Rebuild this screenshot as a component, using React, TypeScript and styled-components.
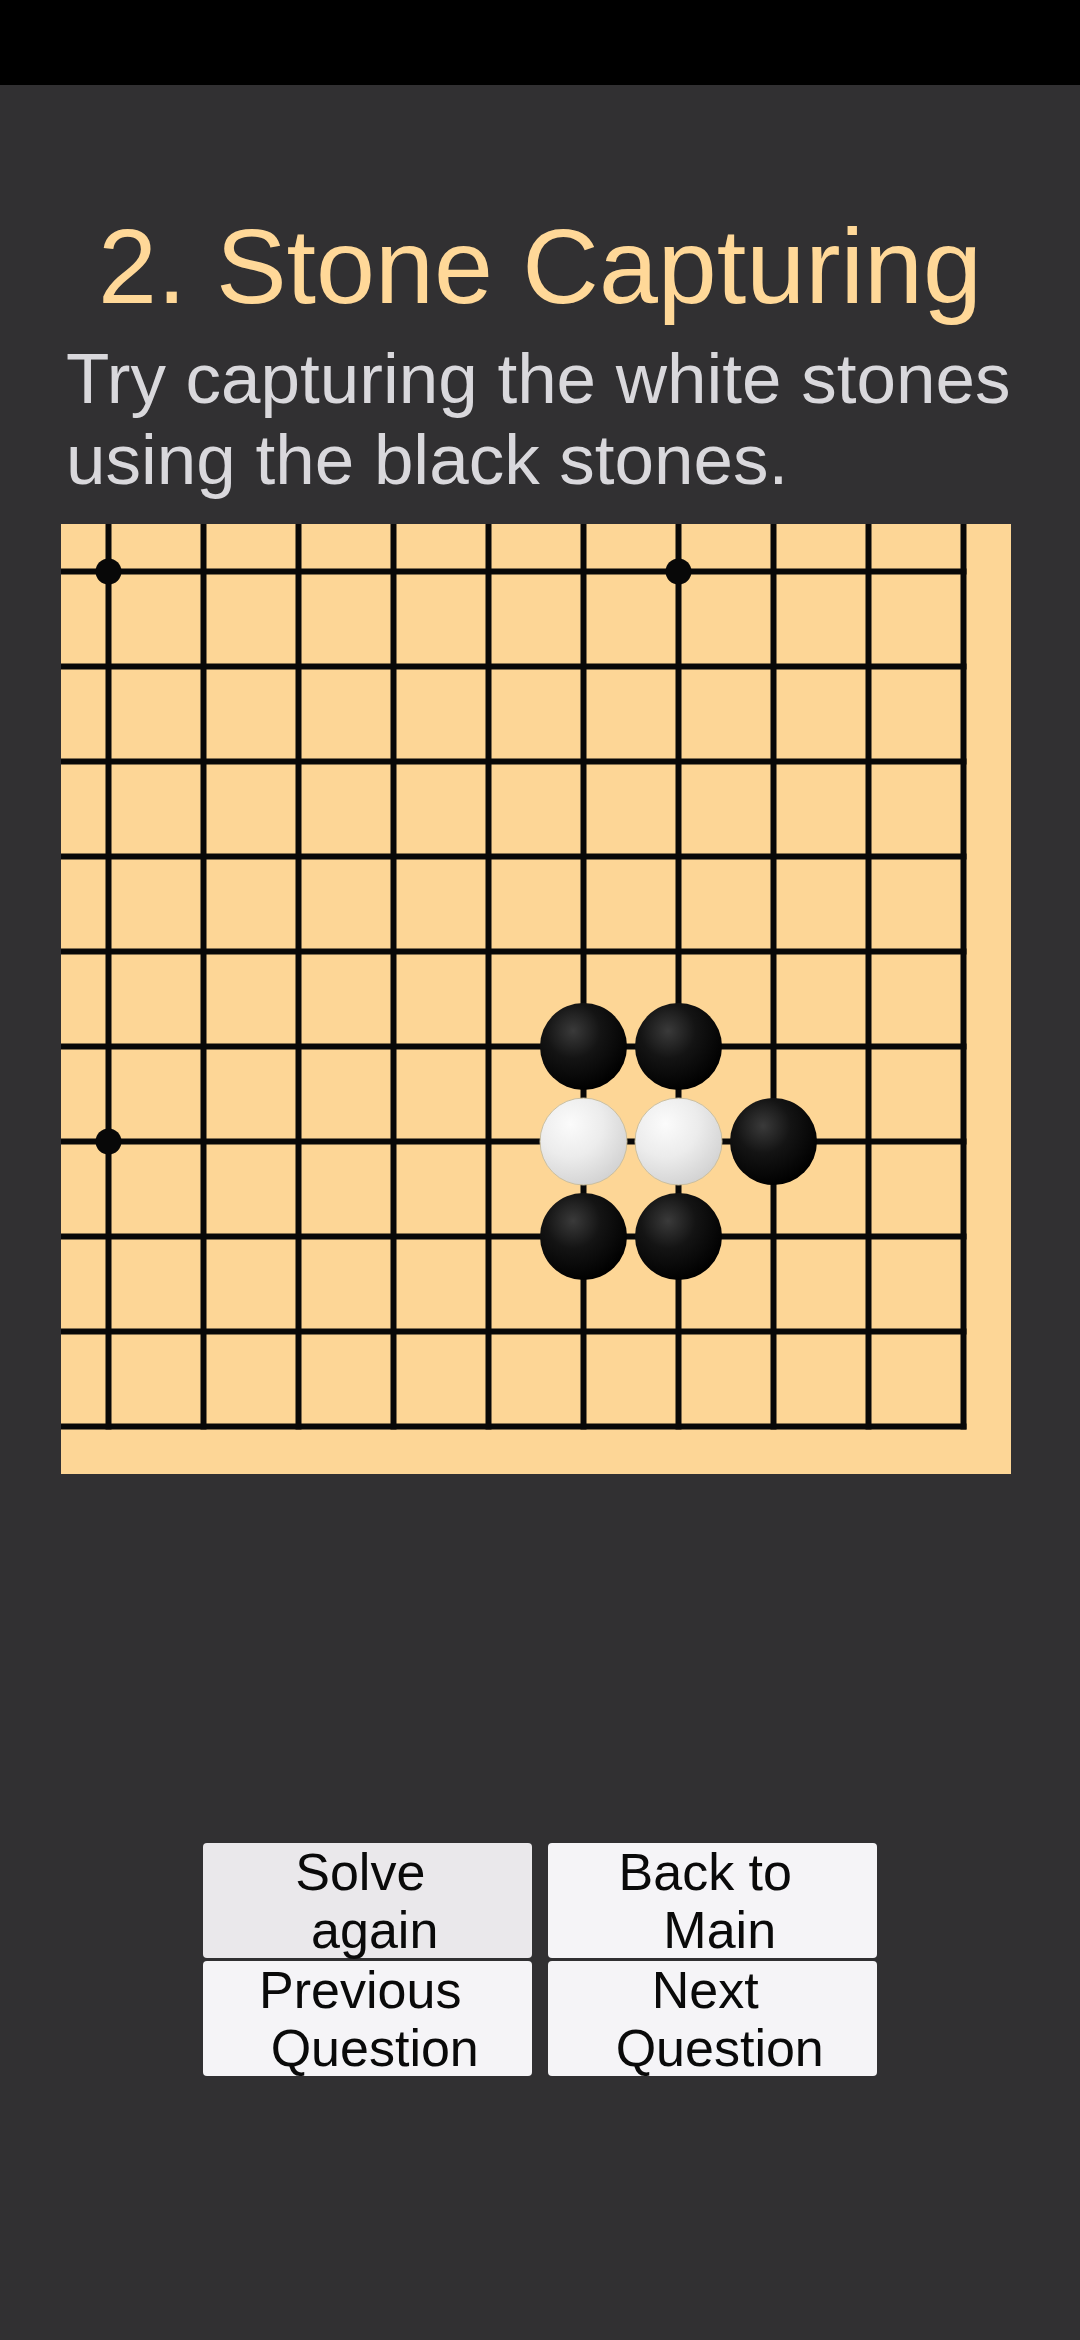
import React from "react";
import styled, { createGlobalStyle } from "styled-components";

const GlobalStyle = createGlobalStyle`
  html, body {
    margin: 0;
    padding: 0;
    background: #313032;
  }
  body {
    font-family: "Liberation Sans", Arial, sans-serif;
  }
  * { box-sizing: border-box; }
`;

const Page = styled.div`
  width: 1080px;
  min-height: 2340px;
  background: #313032;
  display: flex;
  flex-direction: column;
`;

const StatusBar = styled.div`
  height: 85px;
  background: #000;
  flex: none;
`;

const Title = styled.h1`
  margin: 121px 0 0 0;
  font-family: "Liberation Sans", Arial, sans-serif;
  font-weight: 400;
  font-size: 106px;
  line-height: 120px;
  color: #ffd898;
  text-align: center;
  white-space: nowrap;
`;

const Subtitle = styled.p`
  margin: 12px 0 0 0;
  padding: 0 56px 0 66px;
  font-family: "Liberation Sans", Arial, sans-serif;
  font-size: 71px;
  line-height: 81px;
  color: #d9d8dc;
`;

const BoardWrap = styled.div`
  margin: 24px 0 0 61px;
  width: 950px;
  height: 950px;
  background: #fdd696;
  flex: none;
`;

const ButtonGrid = styled.div`
  margin-top: 369px;
  display: grid;
  grid-template-columns: 329px 329px;
  column-gap: 16px;
  row-gap: 3px;
  justify-content: center;
`;

const Button = styled.button<{ $pressed?: boolean }>`
  height: 115px;
  border: none;
  border-radius: 4px;
  padding: 0;
  margin: 0;
  background: ${(p) => (p.$pressed ? "#eae8eb" : "#f5f4f7")};
  color: #0a0a0a;
  font-family: "Liberation Sans", Arial, sans-serif;
  font-size: 52px;
  line-height: 58px;
  display: flex;
  flex-direction: column;
  align-items: center;
  justify-content: flex-start;
  cursor: pointer;
`;

const Line = styled.span`
  display: block;
  white-space: pre;
  text-align: center;
`;

const CELL = 95;
const OFF = 47.5;
const N = 10;
const LINE_END = OFF + CELL * (N - 1) + 3;

type Stone = { c: number; r: number; color: "b" | "w" };

const stones: Stone[] = [
  { c: 5, r: 5, color: "b" },
  { c: 6, r: 5, color: "b" },
  { c: 5, r: 6, color: "w" },
  { c: 6, r: 6, color: "w" },
  { c: 7, r: 6, color: "b" },
  { c: 5, r: 7, color: "b" },
  { c: 6, r: 7, color: "b" },
];

const stars = [
  [0, 0],
  [6, 0],
  [0, 6],
];

function Board() {
  const idx = Array.from({ length: N }, (_, i) => i);
  return (
    <BoardWrap>
      <svg width="950" height="950" viewBox="0 0 950 950">
        <defs>
          <radialGradient id="blackG" cx="0.38" cy="0.32" r="0.7">
            <stop offset="0" stopColor="#3a3a3a" />
            <stop offset="0.45" stopColor="#141414" />
            <stop offset="1" stopColor="#000" />
          </radialGradient>
          <radialGradient id="whiteG" cx="0.35" cy="0.3" r="0.75">
            <stop offset="0" stopColor="#fbfbfb" />
            <stop offset="0.5" stopColor="#ececec" />
            <stop offset="1" stopColor="#d2d2d2" />
          </radialGradient>
        </defs>
        {idx.map((i) => (
          <line
            key={"v" + i}
            x1={OFF + i * CELL}
            y1={0}
            x2={OFF + i * CELL}
            y2={LINE_END}
            stroke="#080808"
            strokeWidth={6}
          />
        ))}
        {idx.map((i) => (
          <line
            key={"h" + i}
            x1={0}
            y1={OFF + i * CELL}
            x2={LINE_END}
            y2={OFF + i * CELL}
            stroke="#080808"
            strokeWidth={6}
          />
        ))}
        {stars.map(([c, r]) => (
          <circle key={`s${c}-${r}`} cx={OFF + c * CELL} cy={OFF + r * CELL} r={13} fill="#080808" />
        ))}
        {stones.map((s) => (
          <circle
            key={`st${s.c}-${s.r}`}
            cx={OFF + s.c * CELL}
            cy={OFF + s.r * CELL}
            r={43.5}
            fill={s.color === "b" ? "url(#blackG)" : "url(#whiteG)"}
            stroke={s.color === "w" ? "#cbbf9f" : "none"}
            strokeWidth={s.color === "w" ? 1 : 0}
          />
        ))}
      </svg>
    </BoardWrap>
  );
}

const buttons: { a: string; b: string; pressed?: boolean }[] = [
  { a: "Solve", b: "again", pressed: true },
  { a: "Back to", b: "Main" },
  { a: "Previous", b: "Question" },
  { a: "Next", b: "Question" },
];

export default function App() {
  return (
    <>
      <GlobalStyle />
      <Page>
        <StatusBar />
        <Title>2. Stone Capturing</Title>
        <Subtitle>Try capturing the white stones using the black stones.</Subtitle>
        <Board />
        <ButtonGrid>
          {buttons.map((b) => (
            <Button key={b.a + b.b} $pressed={b.pressed}>
              <Line>{b.a + "\u00a0"}</Line>
              <Line>{"\u00a0" + b.b}</Line>
            </Button>
          ))}
        </ButtonGrid>
      </Page>
    </>
  );
}
